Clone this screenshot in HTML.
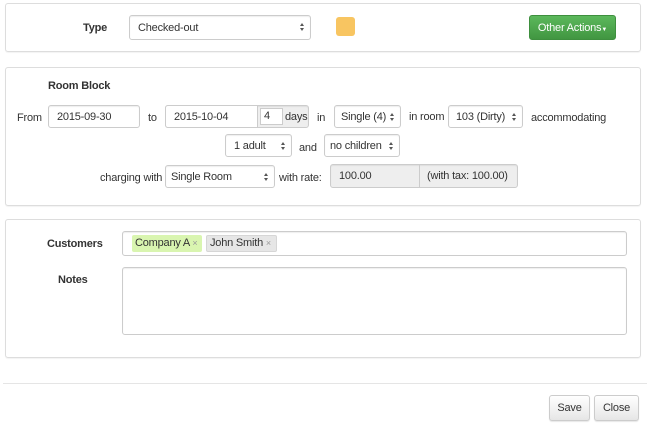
<!DOCTYPE html>
<html><head><style>
body{margin:0;width:650px;height:436px;background:#fff;font-family:"Liberation Sans",sans-serif;font-size:11px;letter-spacing:-0.2px;color:#333;position:relative;overflow:hidden}
.a{position:absolute}
.panel{position:absolute;left:5px;width:634px;border:1px solid #ddd;border-radius:3px;box-shadow:0 1px 1px rgba(0,0,0,.05)}
.inp{position:absolute;box-sizing:border-box;border:1px solid #ccc;border-radius:3px;background:#fff;padding:0 8px;line-height:22px;height:23px;box-shadow:inset 0 1px 1px rgba(0,0,0,.07)}
.sel::after{content:"";position:absolute;right:6px;top:7px;width:0;height:0;border-left:2.5px solid transparent;border-right:2.5px solid transparent;border-bottom:3px solid #555}
.sel::before{content:"";position:absolute;right:6px;top:12px;width:0;height:0;border-left:2.5px solid transparent;border-right:2.5px solid transparent;border-top:3px solid #555}
.lbl{position:absolute;line-height:14px}
b{font-weight:bold;color:#333}
.btn{position:absolute;box-sizing:border-box;border:1px solid #ccc;border-radius:3px;background:linear-gradient(#fff,#e6e6e6);text-align:center;line-height:24px;box-shadow:0 1px 1px rgba(0,0,0,.1)}
</style></head><body>
<div class="panel" style="top:3px;height:47px"></div>
<div class="lbl" style="left:83px;top:21px"><b>Type</b></div>
<div class="inp sel" style="left:129px;top:15px;width:182px;height:25px;line-height:24px">Checked-out</div>
<div class="a" style="left:336px;top:17px;width:19px;height:19px;background:#f8c561;border-radius:3px"></div>
<div class="a" style="left:529px;top:15px;width:87px;height:25px;border-radius:3px;background:linear-gradient(#5cb85c,#419641);border:1px solid #3e8f3e;box-sizing:border-box;color:#fff;text-align:center;line-height:24px">Other Actions<span style="font-size:6px">▼</span></div>

<div class="panel" style="top:67px;height:137px"></div>
<div class="lbl" style="left:48px;top:79px"><b>Room Block</b></div>
<div class="lbl" style="left:17px;top:111px">From</div>
<div class="inp" style="left:48px;top:105px;width:92px">2015-09-30</div>
<div class="lbl" style="left:148px;top:111px">to</div>
<div class="inp" style="left:165px;top:105px;width:144px;background:#eee;padding:0"><div class="a" style="left:-1px;top:-1px;width:93px;height:23px;box-sizing:border-box;border:1px solid #ccc;border-radius:3px 0 0 3px;background:#fff;padding-left:8px">2015-10-04</div><div class="a" style="left:94px;top:2px;width:23px;height:17px;box-sizing:border-box;border:1px solid #ccc;background:#fff;line-height:15px;padding-left:3px">4</div><span class="a" style="left:119px;top:0">days</span></div>
<div class="lbl" style="left:317px;top:111px">in</div>
<div class="inp sel" style="left:334px;top:105px;width:67px;padding-left:6px">Single (4)</div>
<div class="lbl" style="left:409px;top:110px">in room</div>
<div class="inp sel" style="left:448px;top:105px;width:75px;padding-left:7px">103 (Dirty)</div>
<div class="lbl" style="left:531px;top:111px">accommodating</div>
<div class="inp sel" style="left:225px;top:134px;width:67px">1 adult</div>
<div class="lbl" style="left:299px;top:141px">and</div>
<div class="inp sel" style="left:324px;top:134px;width:76px;padding-left:5px">no children</div>
<div class="lbl" style="left:100px;top:171px">charging with</div>
<div class="inp sel" style="left:165px;top:165px;width:110px;padding-left:5px">Single Room</div>
<div class="lbl" style="left:279px;top:171px">with rate:</div>
<div class="inp" style="left:330px;top:164px;width:188px;height:24px;background:#eee;padding:0"><span class="a" style="left:8px;top:0">100.00</span><div class="a" style="left:88px;top:-1px;width:1px;height:24px;background:#ccc"></div><span class="a" style="left:96px;top:0">(with tax: 100.00)</span></div>

<div class="panel" style="top:219px;height:137px"></div>
<div class="lbl" style="left:47px;top:237px"><b>Customers</b></div>
<div class="inp" style="left:122px;top:231px;width:505px;height:25px"></div>
<div class="a" style="left:132px;top:235px;width:70px;height:17px;background:#d9f5b0;border-radius:2px;line-height:17px;padding-left:3px;box-sizing:border-box">Company A <span style="color:#999;font-size:9px">×</span></div>
<div class="a" style="left:206px;top:235px;width:71px;height:17px;background:#e6e6e6;border:1px solid #d6d6d6;border-radius:2px;line-height:15px;padding-left:3px;box-sizing:border-box">John Smith <span style="color:#999;font-size:9px">×</span></div>
<div class="lbl" style="left:58px;top:273px"><b>Notes</b></div>
<div class="inp" style="left:122px;top:267px;width:505px;height:68px"></div>

<div class="a" style="left:3px;top:383px;width:644px;height:1px;background:#e5e5e5"></div>
<div class="btn" style="left:549px;top:395px;width:41px;height:26px">Save</div>
<div class="btn" style="left:594px;top:395px;width:45px;height:26px">Close</div>
</body></html>
